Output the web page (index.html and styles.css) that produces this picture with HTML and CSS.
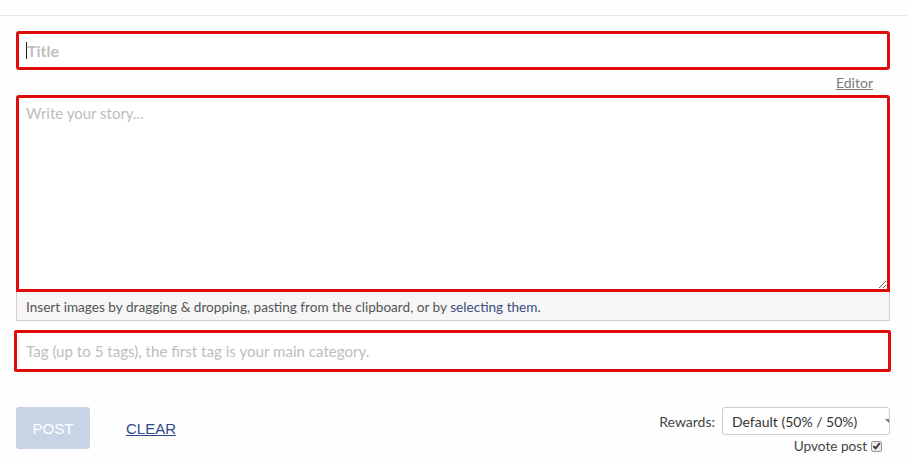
FILE: index.html
```html
<!DOCTYPE html>
<html>
<head>
<meta charset="utf-8">
<link rel="stylesheet" href="styles.css">
</head>
<body>
<div class="topbar"></div>
<form class="editor">
  <div class="title-box">
    <span class="caret"></span>
    <input class="title-input" type="text" placeholder="Title">
  </div>
  <div class="editor-row"><a class="editor-link" href="#">Editor</a></div>
  <textarea class="story" placeholder="Write your story..."></textarea>
  <div class="drop-info">Insert images by dragging &amp; dropping, pasting from the clipboard, or by <a class="select-link" href="#">selecting them</a>.</div>
  <input class="tag-input" type="text" placeholder="Tag (up to 5 tags), the first tag is your main category.">
  <div class="actions">
    <div class="left-actions">
      <button type="button" class="post-btn">POST</button>
      <a class="clear-link" href="#">CLEAR</a>
    </div>
    <div class="right-actions">
      <div class="rewards-row">
        <span class="rewards-label">Rewards:</span>
        <div class="select-box"><span>Default (50% / 50%)</span><svg class="arrow" width="4" height="6" viewBox="0 0 4 6"><path d="M0 1 L4 1 L4 5 Z" fill="#777"/></svg></div>
      </div>
      <div class="upvote-row">
        <span>Upvote post</span>
        <span class="checkbox"><svg width="10" height="10" viewBox="0 0 10 10"><path d="M1.5 5.2 L4 7.6 L8.6 1.8" fill="none" stroke="#333" stroke-width="2"/></svg></span>
      </div>
    </div>
  </div>
</form>
</body>
</html>
```

FILE: styles.css
```css
* { box-sizing: border-box; }
html, body { margin: 0; padding: 0; background: #fefefe; }
body { font-family: "Lato", "Source Sans Pro", sans-serif; color: #333; }

.topbar { height: 16px; border-bottom: 1px solid #e6e6e6; }

.editor { padding: 15px 17px 0 16px; }

.title-box { position: relative; }
.caret { position: absolute; left: 10px; top: 11px; width: 1px; height: 17px; background: #222; }
.title-input {
  display: block; width: 100%; height: 39px;
  border: 3px solid #e00b0b; border-radius: 3px;
  padding: 0 8px; font-family: inherit; font-size: 16px; font-weight: 700;
  background: #fff; outline: none;
}
.title-input::placeholder { color: #c0c0c0; font-weight: 700; }

.editor-row { display: flex; justify-content: flex-end; height: 25px; padding: 4px 17px 0 0; }
.editor-link { color: #7a7a7a; font-size: 14px; text-decoration: underline; }

.story {
  display: block; width: 100%; height: 197px; resize: vertical;
  border: 3px solid #e00b0b; border-radius: 3px 3px 0 0;
  padding: 6px 7px; font-family: inherit; font-size: 15px; background: #fff; outline: none;
}
.story::placeholder { color: #bdbdbd; }

.drop-info {
  height: 29px; background: #f6f6f6; border: 1px solid #cfcfcf; border-top: none;
  padding: 7px 9px 0; font-size: 13.6px; color: #555;
}
.select-link { color: #3b4d7f; text-decoration: none; }

.tag-input {
  display: block; width: calc(100% + 3px); height: 42px; margin: 9px -1px 0 -2px;
  border: 3px solid #e00b0b; border-radius: 2px;
  padding: 0 9px; font-family: inherit; font-size: 15.1px; background: #fff; outline: none;
}
.tag-input::placeholder { color: #bdbdbd; }

.actions { display: flex; justify-content: space-between; align-items: flex-start; margin-top: 35px; }
.left-actions { display: flex; align-items: center; gap: 36px; }
.post-btn {
  width: 74px; height: 42px; border: none; border-radius: 3px;
  background: #c6d4e5; color: #fff; font-family: "Liberation Sans", Arial, sans-serif; font-size: 15px;
}
.clear-link { color: #2f4a8a; font-family: "Liberation Sans", Arial, sans-serif; font-size: 15px; text-decoration: underline; }

.right-actions { display: flex; flex-direction: column; align-items: flex-end; }
.rewards-row { display: flex; align-items: center; gap: 7px; font-size: 14px; }
.rewards-label { color: #444; }
.select-box {
  width: 168px; height: 28px; border: 1px solid #ccc; border-radius: 3px; background: #fff;
  display: flex; align-items: center; justify-content: space-between; padding: 0 0 0 9px; overflow: hidden;
  color: #333;
}
.arrow { display: block; margin-right: 0; }
.upvote-row { display: flex; align-items: center; gap: 4px; margin-top: 3px; padding-right: 8px; font-size: 13.6px; color: #444; }
.checkbox {
  width: 11px; height: 11px; border: 1px solid #999; border-radius: 2px; background: #e8e8e8;
  display: flex; align-items: center; justify-content: center;
}
```
